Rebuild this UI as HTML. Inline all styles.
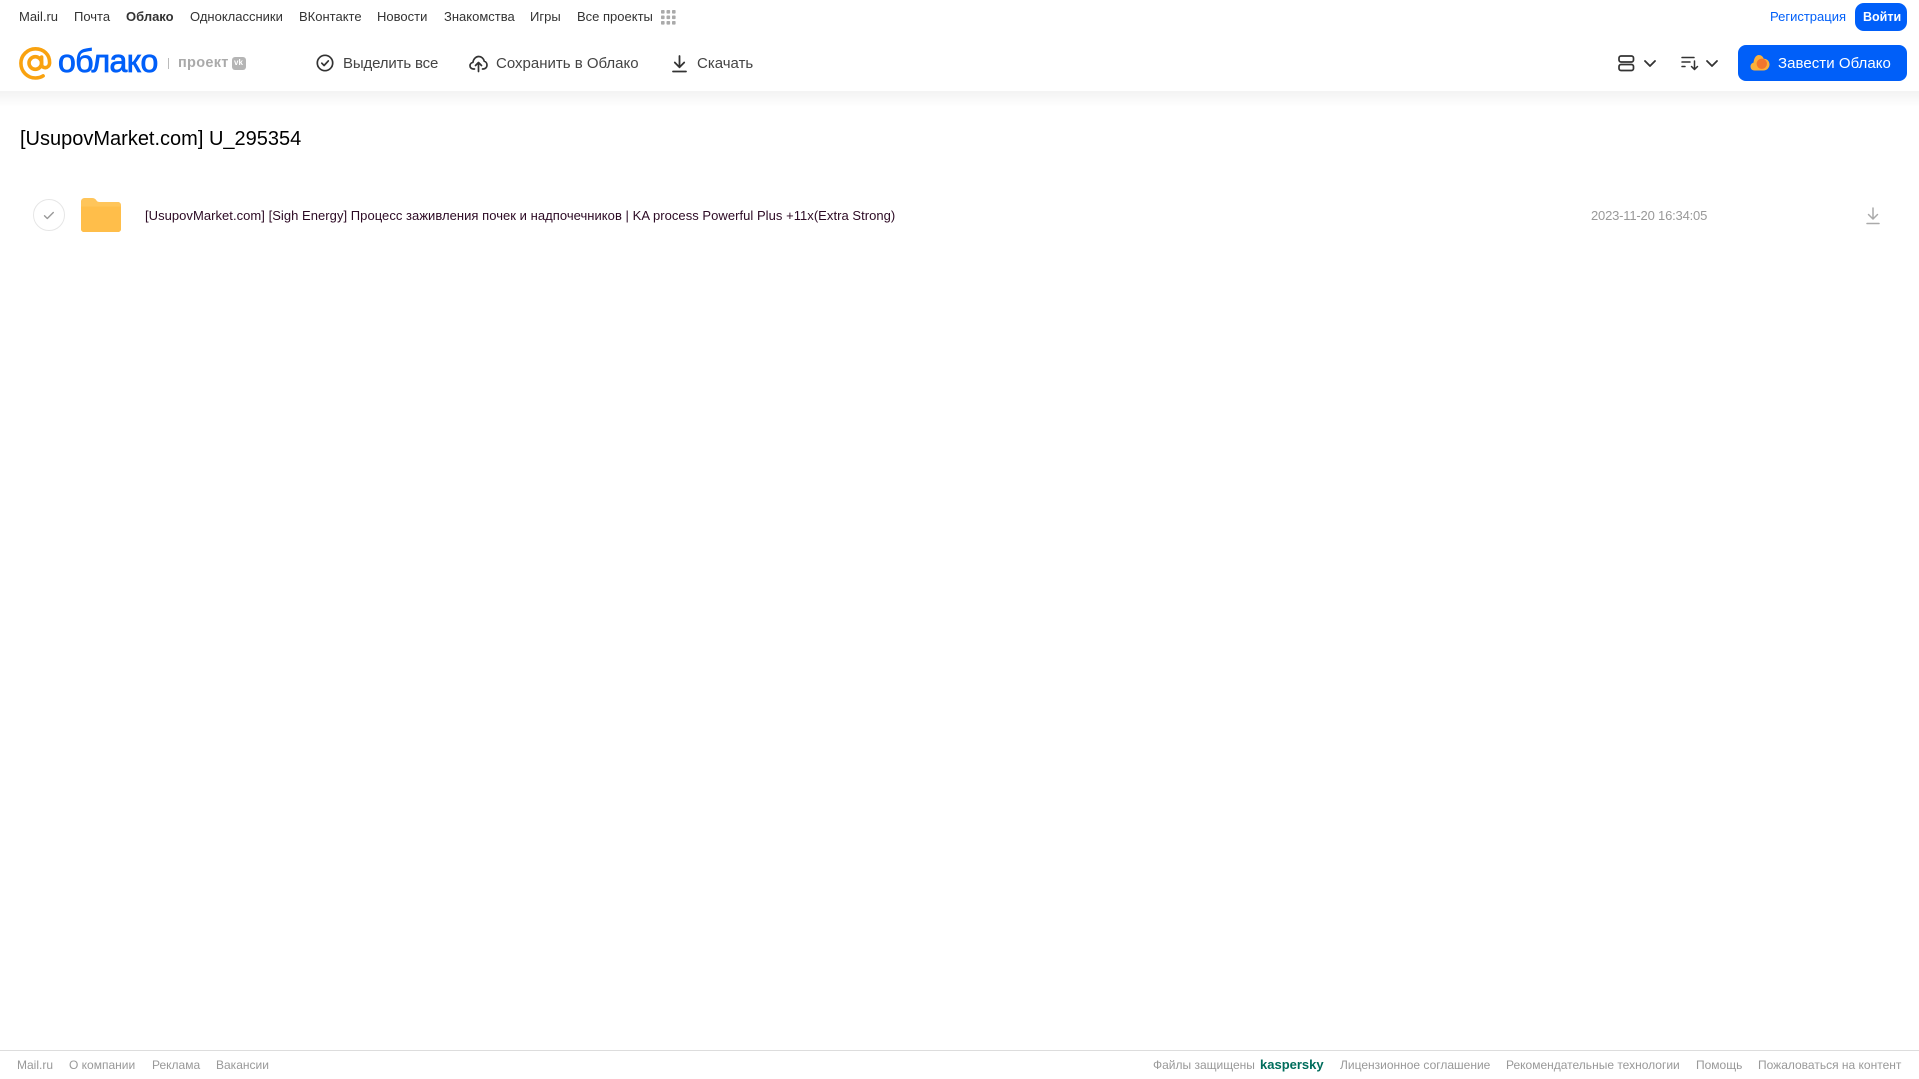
<!DOCTYPE html>
<html lang="ru">
<head>
<meta charset="utf-8">
<title>Облако</title>
<style>
html,body{margin:0;padding:0;background:#fff}
body{width:1919px;height:1079px;position:relative;overflow:hidden;font-family:"Liberation Sans",Arial,sans-serif}
.t{position:absolute;white-space:nowrap;line-height:20px}
svg{position:absolute;overflow:visible}
.n{top:7px;font-size:13px;color:#333}
.b{top:53.500px;font-size:15px;color:#444}
.f{top:1055px;font-size:12px;color:#999}
#shadow{position:absolute;left:0;top:91px;width:1919px;height:16px;background:linear-gradient(#f3f3f3,#fff)}
#foot{position:absolute;left:0;top:1050px;width:1919px;height:1px;background:#ddd}
</style>
</head>
<body>
<div id="shadow"></div>

<span class="t n" style="left:19px">Mail.ru</span>
<span class="t n" style="left:74px">Почта</span>
<span class="t n" style="left:126px;font-weight:700">Облако</span>
<span class="t n" style="left:190px">Одноклассники</span>
<span class="t n" style="left:299px">ВКонтакте</span>
<span class="t n" style="left:377px">Новости</span>
<span class="t n" style="left:444px">Знакомства</span>
<span class="t n" style="left:530px">Игры</span>
<span class="t n" style="left:577px">Все проекты</span>
<svg style="left:661px;top:10px" width="15" height="15" viewBox="0 0 15 15" fill="#aaa">
<rect x="0" y="0" width="3.6" height="3.6" rx=".8"/><rect x="5.5" y="0" width="3.6" height="3.6" rx=".8"/><rect x="11" y="0" width="3.6" height="3.6" rx=".8"/>
<rect x="0" y="5.5" width="3.6" height="3.6" rx=".8"/><rect x="5.5" y="5.5" width="3.6" height="3.6" rx=".8"/><rect x="11" y="5.5" width="3.6" height="3.6" rx=".8"/>
<rect x="0" y="11" width="3.6" height="3.6" rx=".8"/><rect x="5.5" y="11" width="3.6" height="3.6" rx=".8"/><rect x="11" y="11" width="3.6" height="3.6" rx=".8"/>
</svg>

<span class="t" style="left:1770px;top:7px;font-size:13px;color:#005ff9">Регистрация</span>
<div style="position:absolute;left:1855px;top:3px;width:52px;height:28px;border-radius:9px;background:#005ff9"></div>
<span class="t" style="left:1863px;top:7px;font-size:12.500px;font-weight:700;color:#fff">Войти</span>

<!-- logo -->
<svg style="left:19px;top:47px" width="33" height="33" viewBox="0 0 33 33" fill="none" stroke="#f9a20f" stroke-width="3.6" stroke-linecap="round">
<circle cx="16.3" cy="16" r="6.3"/>
<path d="M22.6 10v7.4c0 4.6 7.8 4.6 8-1.6C30.8 7.500 24.500 1.800 16.500 1.800 8.500 1.800 1.900 8.300 1.900 16.200c0 8.300 6.500 14.800 14.600 14.800 2.900 0 5.500-.7 7.600-2.100"/>
</svg>
<span class="t" style="left:58px;top:43px;font-size:32px;line-height:36px;color:#005ff9;-webkit-text-stroke:.8px #005ff9;letter-spacing:-.6px">облако</span>
<div style="position:absolute;left:168px;top:58px;width:1px;height:11px;background:#bbb"></div>
<span class="t" style="left:178px;top:53px;font-size:14.500px;font-weight:700;color:#aaa;letter-spacing:.3px">проект</span>
<div style="position:absolute;left:232px;top:57px;width:14px;height:13px;border-radius:3px;background:#b5b5b5"></div>
<span class="t" style="left:234px;top:53px;font-size:8px;font-weight:700;color:#fff">vk</span>

<!-- toolbar -->
<svg style="left:316px;top:54px" width="18" height="18" viewBox="0 0 18 18" fill="none" stroke="#333" stroke-width="1.7" stroke-linecap="round" stroke-linejoin="round">
<circle cx="9" cy="9" r="7.700"/><path d="M5.800 9.200l2.300 2.300 4.200-4.600"/>
</svg>
<span class="t b" style="left:343px;letter-spacing:-.15px">Выделить все</span>
<svg style="left:469px;top:55px" width="19" height="17" viewBox="0 0 19 17" fill="none" stroke="#333" stroke-width="1.7" stroke-linecap="round" stroke-linejoin="round">
<path d="M5.500 14H4.300C2.400 14 1 12.500 1 10.700c0-1.700 1.200-3 2.900-3.300C4.400 4 6.800 1.500 9.700 1.500c2.800 0 5 2 5.500 4.700 1.600.4 2.800 2 2.800 3.900 0 2.200-1.700 3.900-3.800 3.900h-.7"/>
<path d="M9.500 16.500V8M6.500 10.500l3-3 3 3"/>
</svg>
<span class="t b" style="left:496px">Сохранить в Облако</span>
<svg style="left:672px;top:55px" width="15" height="18" viewBox="0 0 15 18" fill="none" stroke="#333" stroke-width="1.800" stroke-linecap="round" stroke-linejoin="round">
<path d="M7.500 1v11M2.800 7.500l4.700 4.800 4.700-4.800M1 16.500h13"/>
</svg>
<span class="t b" style="left:697px">Скачать</span>

<!-- right toolbar -->
<svg style="left:1618px;top:55px" width="17" height="17" viewBox="0 0 17 17" fill="none" stroke="#333" stroke-width="1.700">
<rect x="1" y="1" width="14.500" height="6" rx="2"/><rect x="1" y="9.500" width="14.500" height="6" rx="2"/>
</svg>
<svg style="left:1644px;top:60px" width="12" height="7" viewBox="0 0 12 7" fill="none" stroke="#333" stroke-width="1.800" stroke-linecap="round" stroke-linejoin="round"><path d="M1 1l5 5 5-5"/></svg>
<svg style="left:1681px;top:56px" width="18" height="15" viewBox="0 0 18 15" fill="none" stroke="#333" stroke-width="1.500" stroke-linecap="round" stroke-linejoin="round">
<path d="M1 1.500h12M1 6h8M1 10.500h3M13.500 5v8.500M10.500 10.500l3 3 3-3"/>
</svg>
<svg style="left:1706px;top:60px" width="12" height="7" viewBox="0 0 12 7" fill="none" stroke="#333" stroke-width="1.800" stroke-linecap="round" stroke-linejoin="round"><path d="M1 1l5 5 5-5"/></svg>

<div style="position:absolute;left:1738px;top:45px;width:169px;height:36px;border-radius:8px;background:#005ff9"></div>
<svg style="left:1750px;top:54px" width="20" height="18" viewBox="0 0 20 18">
<path d="M4.500 16.500C2 16.500.5 14.700.5 12.500c0-2 1.300-3.500 3-3.900C4 4.300 6 1 8.800 1c2.500 0 4.200 1.700 4.900 3.700 3.200-.2 5.800 2.400 5.800 5.700 0 3.400-2.600 6.100-6 6.100z" fill="#fbb03b"/>
<circle cx="11.800" cy="9.800" r="5.200" fill="#f2762e"/>
</svg>
<span class="t b" style="left:1778px;color:#fff;letter-spacing:.05px">Завести Облако</span>

<!-- title -->
<span class="t" style="left:20px;top:125px;font-size:20px;line-height:28px;color:#000">[UsupovMarket.com] U_295354</span>

<!-- row -->
<div style="position:absolute;left:33px;top:199px;width:30px;height:30px;border:1px solid #e6e6e6;border-radius:50%"></div>
<svg style="left:43px;top:211px" width="12" height="9" viewBox="0 0 12 9" fill="none" stroke="#999" stroke-width="1.400" stroke-linecap="round" stroke-linejoin="round"><path d="M1.500 4.800l2.800 2.700 6-6"/></svg>
<svg style="left:81px;top:198px" width="40" height="34" viewBox="0 0 40 34">
<path d="M0 3.500C0 1.600 1.600 0 3.500 0H11c2 0 3.500.8 4.500 2.500.7 1.100 1.700 1.500 3 1.500H37c1.700 0 3 1.300 3 3v24c0 1.700-1.300 3-3 3H3c-1.700 0-3-1.300-3-3z" fill="#ffc55a"/>
<path d="M0 8.500h40V31c0 1.700-1.300 3-3 3H3c-1.700 0-3-1.300-3-3z" fill="#ffbe4a"/>
</svg>
<span class="t" style="left:145px;top:206px;font-size:13px;color:#2c0a24;letter-spacing:.04px">[UsupovMarket.com] [Sigh Energy] Процесс заживления почек и надпочечников | KA process Powerful Plus +11x(Extra Strong)</span>
<span class="t" style="left:1591px;top:206px;font-size:13px;color:#999;letter-spacing:-.19px">2023-11-20 16:34:05</span>
<svg style="left:1866px;top:207px" width="14" height="18" viewBox="0 0 14 18" fill="none" stroke="#aaa" stroke-width="1.500" stroke-linecap="round" stroke-linejoin="round">
<path d="M7 1v10.500M2.500 7.500L7 12l4.500-4.500M1 16.500h12"/>
</svg>

<!-- footer -->
<div id="foot"></div>
<span class="t f" style="left:17px">Mail.ru</span>
<span class="t f" style="left:69px">О компании</span>
<span class="t f" style="left:152px">Реклама</span>
<span class="t f" style="left:216px">Вакансии</span>
<span class="t f" style="left:1153px">Файлы защищены</span>
<span class="t f" style="left:1260px;font-weight:700;font-size:13px;color:#006d5c">kaspersky</span>
<span class="t f" style="left:1340px">Лицензионное соглашение</span>
<span class="t f" style="left:1506px">Рекомендательные технологии</span>
<span class="t f" style="left:1696px">Помощь</span>
<span class="t f" style="left:1758px">Пожаловаться на контент</span>
</body>
</html>
